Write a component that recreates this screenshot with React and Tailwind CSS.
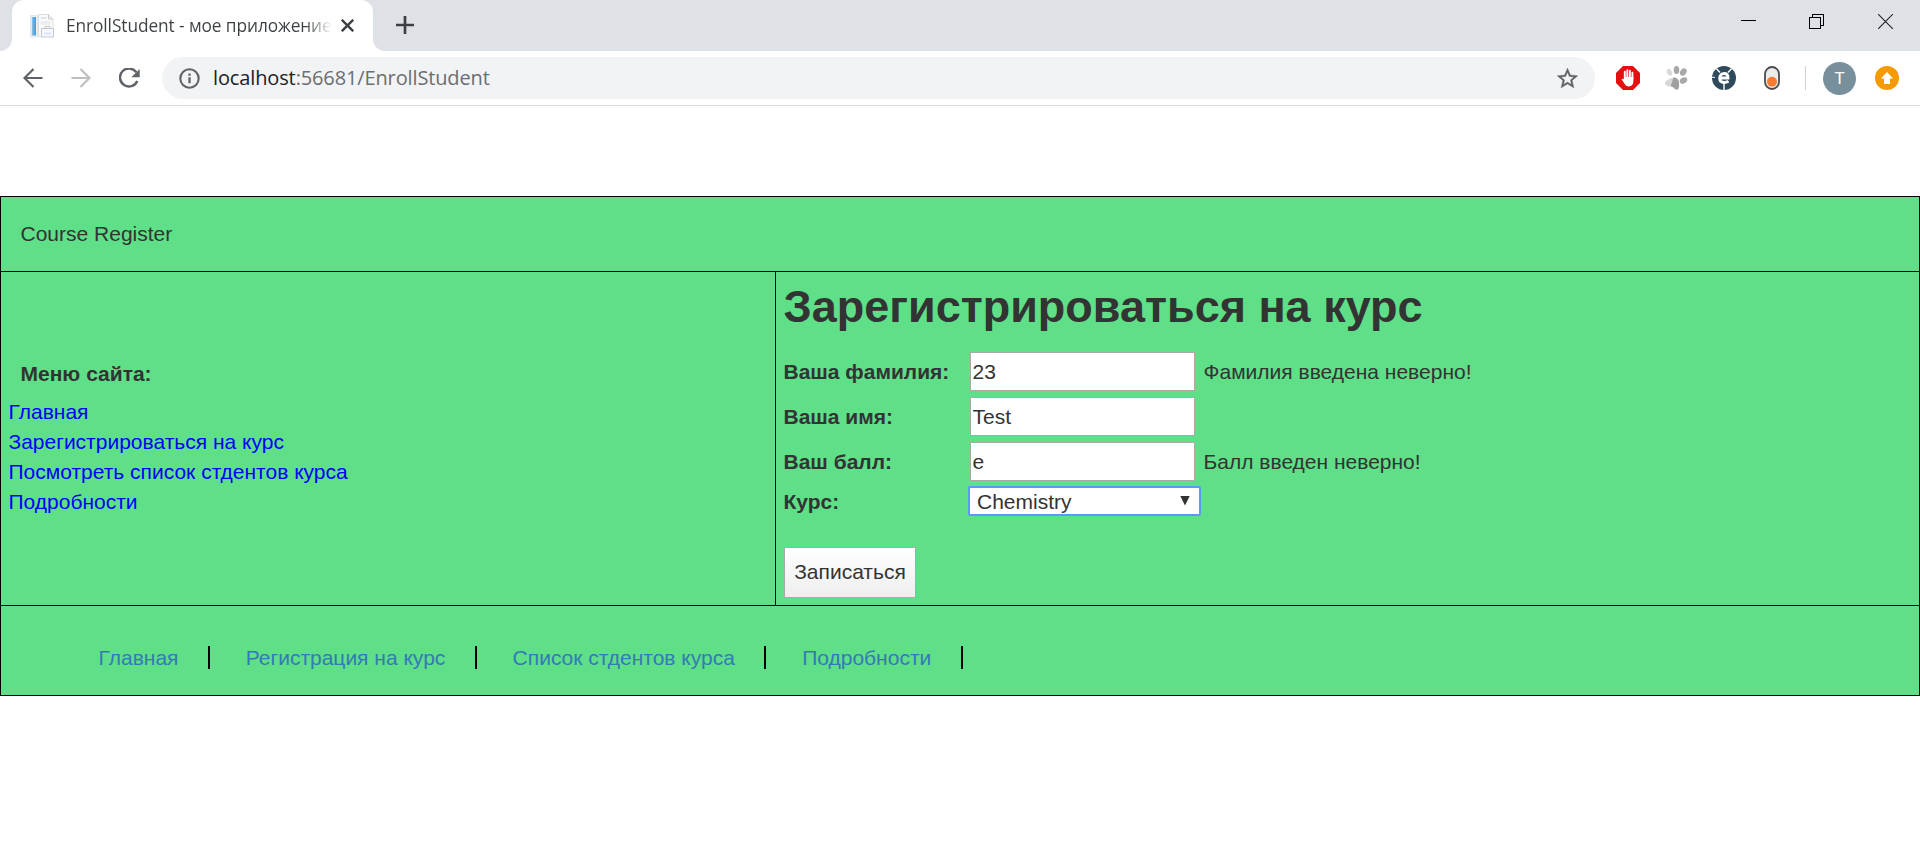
import React from 'react';

const menuLinks = ['Главная', 'Зарегистрироваться на курс', 'Посмотреть список стдентов курса', 'Подробности'];
const footerLinks = ['Главная', 'Регистрация на курс', 'Список стдентов курса', 'Подробности'];
const fields = [
  { label: 'Ваша фамилия:', value: '23', error: 'Фамилия введена неверно!' },
  { label: 'Ваша имя:', value: 'Test', error: '' },
  { label: 'Ваш балл:', value: 'e', error: 'Балл введен неверно!' },
];

function Favicon() {
  return (
    <svg className="h-6 w-6 shrink-0" viewBox="0 0 24 24">
      <defs>
        <linearGradient id="bar" x1="0" y1="0" x2="1" y2="0">
          <stop offset="0" stopColor="#8cc2ea" />
          <stop offset="1" stopColor="#3f98d6" />
        </linearGradient>
      </defs>
      <rect x="0.5" y="1.5" width="7" height="21.5" fill="#eef2f6" stroke="#e4e8ec" />
      <rect x="1.800" y="3" width="4.200" height="18.5" fill="url(#bar)" />
      <path d="M8.500 .5h10l4.500 4.500v17.500h-14.500z" fill="#fafafa" stroke="#dcdee0" />
      <path d="M18.500 .5v4.500h4.500" fill="#eee" stroke="#c8cbcd" />
      <rect x="10.500" y="3" width="6" height="2" fill="#e4e7ea" />
      <rect x="10.500" y="7" width="10" height="4" fill="#eceff2" />
      <path d="M11.500 14.500h12v8.500h-12z" fill="#f6f8fd" stroke="#c4c8cc" />
      <path d="M15 14v-1.500h5v1.500" fill="none" stroke="#c4c8cc" />
      <path d="M14 18.500h7v2h-7z" fill="#dce3f6" />
    </svg>
  );
}

function TabStrip() {
  return (
    <div className="flex h-[51px] items-start bg-[#dee1e6]">
      <div className="h-[51px] w-3 bg-white">
        <div className="h-full w-full rounded-br-[12px] bg-[#dee1e6]" />
      </div>
      <div className="flex h-[51px] w-[361px] items-center rounded-t-[12px] bg-white pl-[18px]">
        <Favicon />
        <div className="ml-[12px] w-[266px] overflow-hidden whitespace-nowrap bg-linear-to-r from-[#3c4043] from-90% to-transparent to-100% bg-clip-text font-['Open_Sans',sans-serif] text-[17.3px] leading-[26px] tracking-[-0.08px] text-transparent">
          EnrollStudent - мое приложение
        </div>
        <svg className="ml-[9px] h-[13px] w-[13px]" viewBox="0 0 12 12" fill="none" stroke="#3c4043" strokeWidth="2.2">
          <path d="M.7.7l10.600 10.600M11.300.7L.7 11.300" />
        </svg>
      </div>
      <div className="h-[51px] w-3 bg-white">
        <div className="h-full w-full rounded-bl-[12px] bg-[#dee1e6]" />
      </div>
      <svg className="mt-4 ml-[11px] h-[18px] w-[18px]" viewBox="0 0 18 18" fill="none" stroke="#3c4043" strokeWidth="2.700">
        <path d="M9 0v18M0 9h18" />
      </svg>
      <svg className="mt-[14px] ml-auto h-4 w-4" viewBox="0 0 16 16">
        <path d="M0 6h15v1H0z" fill="#000" />
      </svg>
      <svg className="mt-[14px] ml-[52px] h-4 w-4" viewBox="0 0 16 16" fill="none" stroke="#000" shapeRendering="crispEdges">
        <path d="M.5 3.500h11v11H.5zM3.500 3.500v-3h11v11h-3" />
      </svg>
      <svg className="mt-[14px] mr-[26px] ml-[53px] h-4 w-4" viewBox="0 0 16 16" fill="none" stroke="#222" strokeWidth="1.100">
        <path d="M.2.2l14.600 14.600M14.800.2L.2 14.800" />
      </svg>
    </div>
  );
}

function Toolbar() {
  return (
    <div className="flex h-[55px] items-center border-b border-[#d9dbdd] bg-white">
      <svg className="ml-[23px] h-5 w-5" viewBox="0 0 20 20" fill="none" stroke="#5f6368" strokeWidth="2.200">
        <path d="M19.500 10H2M10.500 1L1.500 10l9 9" />
      </svg>
      <svg className="ml-[28px] h-5 w-5" viewBox="0 0 20 20" fill="none" stroke="#bdbfc1" strokeWidth="2.200">
        <path d="M.5 10H18M9.500 1l9 9-9 9" />
      </svg>
      <svg className="ml-[28px] h-[21px] w-[21px]" viewBox="0 0 21 21">
        <path d="M17.300 4.200A9 9 0 1 0 18.300 13" fill="none" stroke="#5f6368" strokeWidth="2.400" />
        <path d="M20.700 1v8.300h-8.300z" fill="#5f6368" />
      </svg>
      <div className="ml-[22px] flex h-[42px] w-[1433px] items-center rounded-full bg-[#f1f3f4] pr-[15px] pl-[17px]">
        <svg className="h-[21px] w-[21px]" viewBox="0 0 21 21" fill="none" stroke="#5f6368" strokeWidth="2.100">
          <circle cx="10.500" cy="10.500" r="9.200" />
          <path d="M10.500 9.300v6M10.500 5.400v2.300" strokeWidth="2.300" />
        </svg>
        <div className="ml-[13px] font-['Open_Sans',sans-serif] text-[20px] leading-7 tracking-[-0.13px] text-[#202124]">
          localhost<span className="text-[#6b6e72]">:56681/EnrollStudent</span>
        </div>
        <svg className="ml-auto h-[25px] w-[25px]" viewBox="0 0 24 24" fill="#5f6368">
          <path d="M22 9.240l-7.190-.62L12 2 9.190 8.630 2 9.240l5.460 4.730L5.820 21 12 17.270 18.180 21l-1.630-7.030L22 9.240zM12 15.400l-3.760 2.270 1-4.280-3.320-2.880 4.380-.38L12 6.100l1.710 4.040 4.380.38-3.320 2.880 1 4.280L12 15.400z" stroke="#5f6368" strokeWidth=".3" />
        </svg>
      </div>
      <svg className="ml-[21px] h-6 w-6" viewBox="0 0 24 24">
        <path d="M7 0h10l7 7v10l-7 7H7l-7-7V7z" fill="#e60f0f" />
        <path d="M8.800 13V5.800M11.300 12V4.200M13.900 12V4.600M16.400 13V6.800" stroke="#fff" strokeWidth="1.900" strokeLinecap="round" />
        <path d="M7.900 11h9.450v4.500c0 3-1.600 4.900-4.500 4.900-2.100 0-3.300-.9-4.500-2.900l-2.800-4.200c.7-1 1.700-.6 2.350.3z" fill="#fff" />
      </svg>
      <svg className="ml-[25px] h-6 w-6" viewBox="0 0 24 24">
        <ellipse cx="4.500" cy="6.200" rx="2.500" ry="3.600" transform="rotate(-25 4.500 6.200)" fill="#dadada" />
        <ellipse cx="11.500" cy="4" rx="2.800" ry="4" fill="#a8a8a8" />
        <ellipse cx="18.300" cy="6" rx="2.900" ry="4" transform="rotate(35 18.300 6)" fill="#a8a8a8" />
        <ellipse cx="18.500" cy="14.500" rx="2.800" ry="4" transform="rotate(60 18.500 14.500)" fill="#a8a8a8" />
        <path d="M9 11.500c-2.500 0-4.500 1.500-7 2.800-2.700 1.500-2.500 5 .2 5.700 2.300.6 4.500-.5 6.800.4z" fill="#d8d8d8" />
        <path d="M8.500 11.500c3-.3 5.300 2 5.500 4.500.2 3 .5 7.700-2.300 7.700-2.200 0-2.700-3-6.200-3.200z" fill="#a0a0a0" />
      </svg>
      <svg className="ml-[23px] h-6 w-6" viewBox="0 0 24 24">
        <circle cx="12" cy="12" r="12" fill="#2f4a5d" />
        <path d="M4.500 2.800l3.500 3.700M19.500 2.800L16 6.500M12 17v7" stroke="#fff" strokeWidth="1.400" />
        <path d="M0 11.300h3" stroke="#fff" strokeWidth="1" />
        <path d="M8 12h8c0-3-1.200-4.500-3.800-4.500S7.700 9.200 7.700 12s1.800 4.500 4.500 4.500c1.600 0 3-.4 4.300-1.200" fill="none" stroke="#fff" strokeWidth="2.900" />
      </svg>
      <svg className="ml-[27px] h-6 w-[18px]" viewBox="0 0 18 24">
        <rect x="2" y="1" width="14" height="22" rx="7" fill="#ececec" stroke="#4a4d50" strokeWidth="1.800" />
        <circle cx="9" cy="15.700" r="5" fill="#f47b30" />
      </svg>
      <div className="ml-[24px] h-6 w-px bg-[#cfd1d4]" />
      <div className="ml-[17px] flex h-[33px] w-[33px] items-center justify-center rounded-full bg-[#78909c] font-['Roboto',sans-serif] text-[17px] leading-none text-white">T</div>
      <svg className="ml-[19px] h-6 w-6" viewBox="0 0 24 24">
        <circle cx="12" cy="12" r="12" fill="#f59a00" />
        <path d="M12 6l6 6.500h-3V18H9v-5.500H6z" fill="#fff" />
      </svg>
    </div>
  );
}

function EnrollForm() {
  return (
    <div className="flex-1 pl-[7.500px]">
      <h1 className="mt-[10px] h-[50px] text-[45px] leading-[50px] font-bold whitespace-nowrap">Зарегистрироваться на курс</h1>
      <div className="mt-[20px] flex flex-col gap-[6px]">
        {fields.map((f) => (
          <div key={f.label} className="flex h-[39px] items-center">
            <label className="w-[186.500px] font-bold">{f.label}</label>
            <input className="h-[39px] w-[225px] border border-[#a9a9a9] bg-white px-[1.500px] outline-none" defaultValue={f.value} />
            <span className="ml-[8.500px]">{f.error}</span>
          </div>
        ))}
      </div>
      <div className="mt-[5px] flex h-[30px] items-center">
        <span className="w-[184.500px] pt-px font-bold">Курс:</span>
        <div className="flex h-[30px] w-[233px] items-center justify-between rounded-[2px] border-2 border-[#5b9bea] bg-white pr-[9px] pl-[7px]">
          <span className="pt-px leading-[26px]">Chemistry</span>
          <svg className="h-[10px] w-[10px]" viewBox="0 0 10 10">
            <path d="M.3 0h9.400L5 9.500z" fill="#333" />
          </svg>
        </div>
      </div>
      <button className="mt-[31px] ml-[0.500px] block h-[51px] w-[132px] border border-[#a9a9a9] bg-linear-to-b from-white to-[#eeeeee] pb-[2px] text-center whitespace-nowrap">Записаться</button>
    </div>
  );
}

export default function App() {
  return (
    <div className="h-[867px] w-[1920px] overflow-hidden bg-white">
      <TabStrip />
      <Toolbar />
      <main className="mt-[90px] h-[500px] border border-black bg-[#5fdf87] font-['Liberation_Sans',Arial,sans-serif] text-[21px] leading-[30px] text-[#333]">
        <header className="flex h-[75px] items-center border-b border-black pl-[19.500px]">Course Register</header>
        <div className="flex h-[334px] border-b border-black">
          <nav className="w-[775px] border-r border-black pt-[87px] pl-[7.500px]">
            <div className="mb-[8px] pl-[12px] font-bold">Меню сайта:</div>
            {menuLinks.map((t) => (
              <a key={t} className="block text-[#0000ff]">{t}</a>
            ))}
          </nav>
          <EnrollForm />
        </div>
        <footer className="flex items-center gap-[36px] pt-[40px] pl-[97.500px]">
          {footerLinks.map((t) => (
            <div key={t} className="flex h-[23px] items-center border-r-2 border-black pr-[29.300px] text-[#337ab7]">
              <a>{t}</a>
            </div>
          ))}
        </footer>
      </main>
    </div>
  );
}
